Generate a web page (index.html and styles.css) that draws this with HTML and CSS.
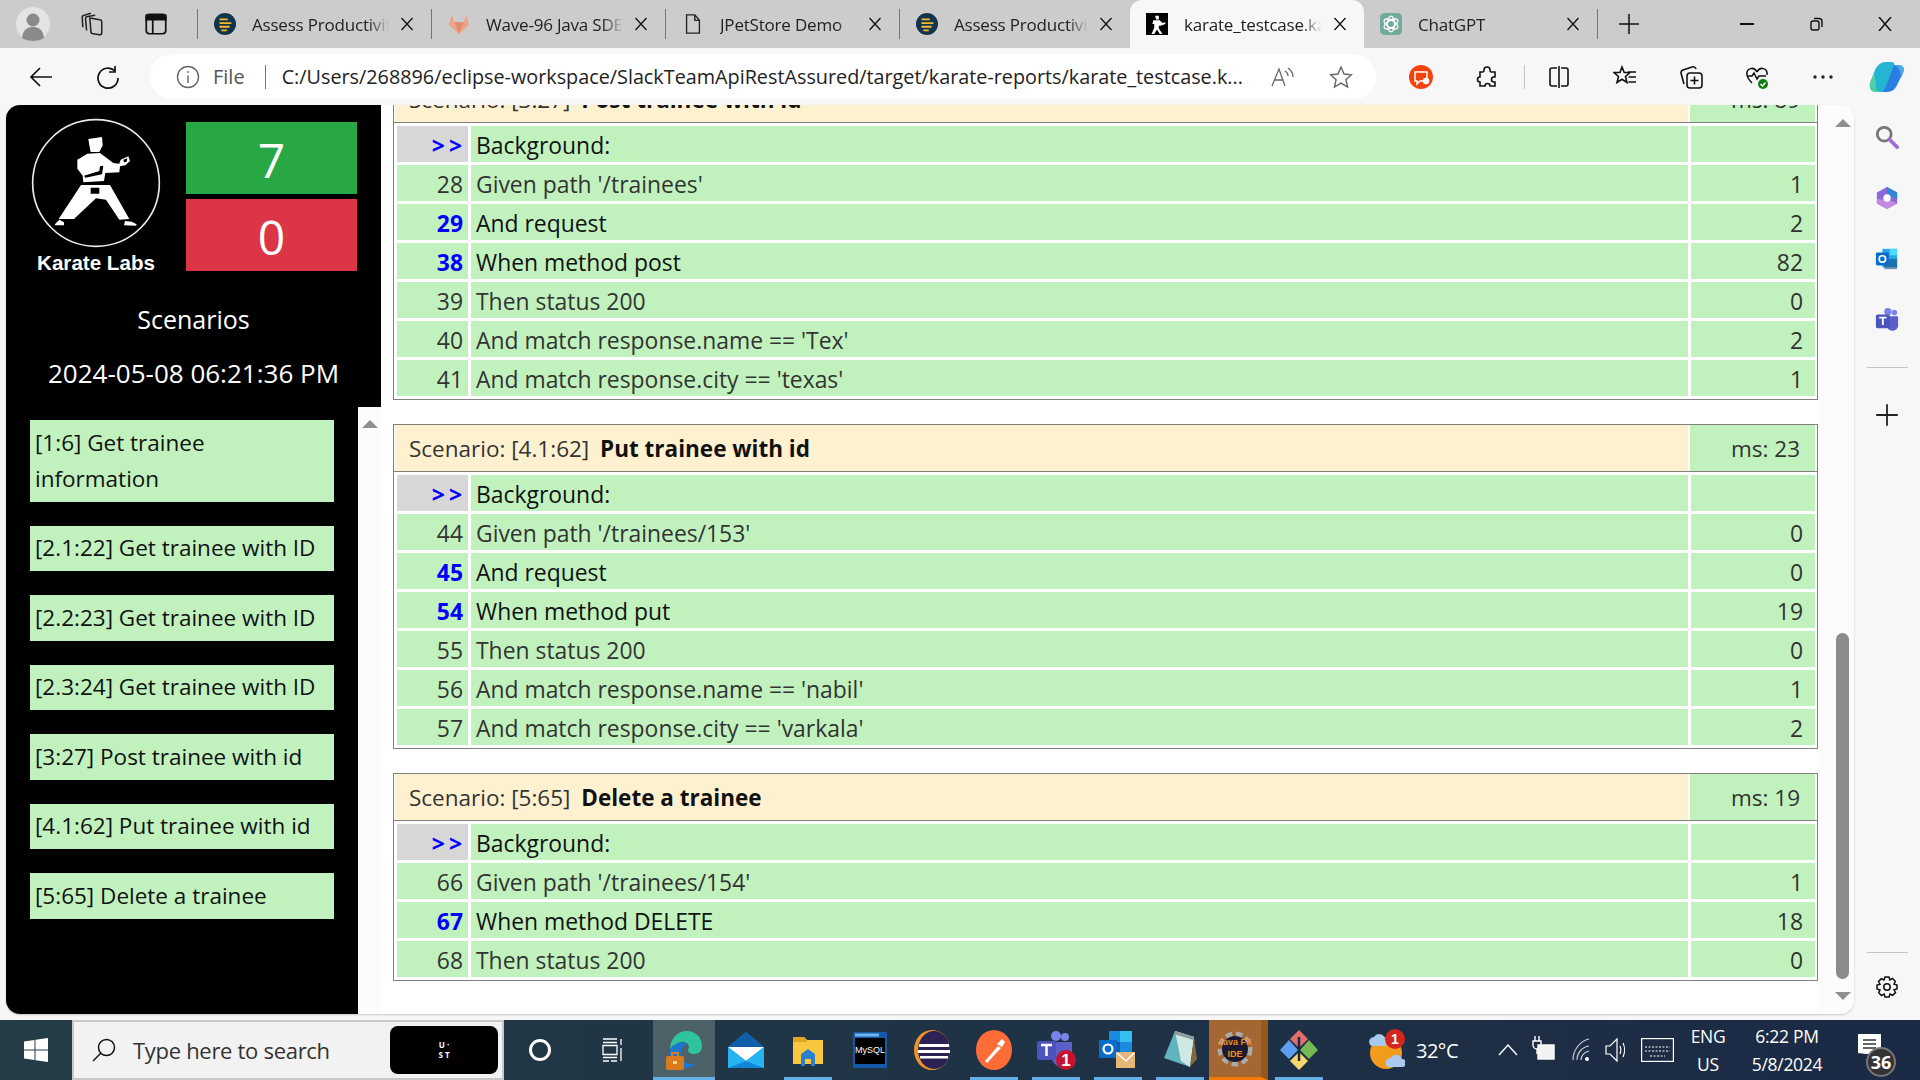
FILE: index.html
```html
<!DOCTYPE html>
<html lang="en">

<head>
    <meta charset="UTF-8">
    <title>karate_testcase.karate</title>
    <link rel="stylesheet" href="styles.css">
</head>

<body>
    <!-- shared icons -->
    <svg class="defs" width="0" height="0">
        <symbol id="i-close" viewBox="0 0 14 14"><path d="M1.5 1 12.5 13M12.5 1 1.5 13" fill="none" stroke="#111" stroke-width="1.3"/></symbol>
        <symbol id="i-assess" viewBox="0 0 24 24"><circle cx="12" cy="12" r="12" fill="#12344d"/><path d="M6 6h9v2H6zM6 10h13v2H6zM6 14h11v2H6zM8 18h6v2H8z" fill="#f5b82e"/></symbol>
    </svg>

    <div class="tabstrip">
        <div class="strip-left">
            <svg class="avatar" viewBox="0 0 34 34"><circle cx="17" cy="17" r="17" fill="#e4e4e4"/><circle cx="17" cy="13" r="6.5" fill="#8a8a8a"/><path d="M6 31c1-9 6-11 11-11s10 2 11 11c-6 4-16 4-22 0z" fill="#8a8a8a"/></svg>
            <svg class="strip-icon" viewBox="0 0 24 24" fill="none" stroke="#222" stroke-width="1.4"><path d="M10 6.500 19 8a2 2 0 0 1 2 2v10a2 2 0 0 1-2 2l-6-1a2 2 0 0 1-2-2z"/><path d="M7 18 6 7a2 2 0 0 1 2-2l7-1M3.500 15 3 6a2 2 0 0 1 2-2l6-2"/></svg>
            <svg class="strip-icon" viewBox="0 0 24 24" fill="none" stroke="#111" stroke-width="1.6"><rect x="3" y="3" width="18" height="18" rx="3"/><path d="M3 4h18v4H3z" fill="#111"/><path d="M9 8v13"/></svg>
        </div>
        <div class="tab-sep"></div>
        <div class="tab">
            <svg class="favicon"><use href="#i-assess"/></svg>
            <span class="tab-title">Assess Productivity Tools</span>
            <svg class="tab-close"><use href="#i-close"/></svg>
        </div>
        <div class="tab-sep"></div>
        <div class="tab">
            <svg class="favicon" viewBox="0 0 24 24"><path d="M12 23 1 13l3-11 3 8h10l3-8 3 11z" fill="#eba58a"/><path d="M12 23 7 10h10z" fill="#e58a6a"/></svg>
            <span class="tab-title">Wave-96 Java SDET Batch</span>
            <svg class="tab-close"><use href="#i-close"/></svg>
        </div>
        <div class="tab-sep"></div>
        <div class="tab">
            <svg class="favicon" viewBox="0 0 24 24" fill="none" stroke="#222" stroke-width="1.5"><path d="M5 2h9l5 6v14H5zM14 2v6h5"/></svg>
            <span class="tab-title">JPetStore Demo</span>
            <svg class="tab-close"><use href="#i-close"/></svg>
        </div>
        <div class="tab-sep"></div>
        <div class="tab tab-short">
            <svg class="favicon"><use href="#i-assess"/></svg>
            <span class="tab-title">Assess Productivity Tools</span>
            <svg class="tab-close"><use href="#i-close"/></svg>
        </div>
        <div class="tab tab-active">
            <svg class="favicon" viewBox="0 0 24 24"><rect width="24" height="24" fill="#000"/><path d="M10 3h4v4h-3zM8 8h7l3 3 3-1v2l-5 2h-2v3l4 6h-3l-3-5-3 5H6l3-7V12H7z" fill="#fff"/></svg>
            <span class="tab-title">karate_testcase.karate</span>
            <svg class="tab-close"><use href="#i-close"/></svg>
        </div>
        <div class="tab">
            <svg class="favicon" viewBox="0 0 24 24"><rect width="24" height="24" rx="5" fill="#74aa9c"/><g fill="none" stroke="#fff" stroke-width="1.4"><ellipse cx="12" cy="12" rx="4" ry="8.5"/><ellipse cx="12" cy="12" rx="4" ry="8.5" transform="rotate(60 12 12)"/><ellipse cx="12" cy="12" rx="4" ry="8.5" transform="rotate(120 12 12)"/></g></svg>
            <span class="tab-title">ChatGPT</span>
            <svg class="tab-close"><use href="#i-close"/></svg>
        </div>
        <div class="tab-sep"></div>
        <svg class="new-tab" viewBox="0 0 22 22"><path d="M11 1v20M1 11h20" stroke="#111" stroke-width="1.5"/></svg>
        <div class="win-controls">
            <svg class="win-btn" viewBox="0 0 14 14"><path d="M0 7h14" stroke="#111" stroke-width="2"/></svg>
            <svg class="win-btn" viewBox="0 0 14 14" fill="none" stroke="#111" stroke-width="1.4"><rect x="2" y="4" width="8" height="9" rx="2"/><path d="M5 1.5h5a3 3 0 0 1 3 3V10"/></svg>
            <svg class="win-btn" viewBox="0 0 14 14"><path d="M1 0 13 14M13 0 1 14" fill="none" stroke="#111" stroke-width="1.5"/></svg>
        </div>
    </div>

    <div class="toolbar">
        <svg class="nav-back" viewBox="0 0 24 24" fill="none" stroke="#111" stroke-width="1.7"><path d="M23 12H2M11 3l-9 9 9 9"/></svg>
        <svg class="nav-reload" viewBox="0 0 24 24" fill="none" stroke="#111" stroke-width="1.7"><path d="M19 6a10 10 0 1 0 3 7"/><path d="M19 1v6h-6"/></svg>
        <div class="addressbar">
            <svg class="info-icon" viewBox="0 0 24 24" fill="none" stroke="#666" stroke-width="1.4"><circle cx="12" cy="12" r="10.5"/><path d="M12 10.5V18M12 6v2"/></svg>
            <span class="addr-file">File</span>
            <span class="addr-sep"></span>
            <span class="addr-url">C:/Users/268896/eclipse-workspace/SlackTeamApiRestAssured/target/karate-reports/karate_testcase.k...</span>
            <svg class="addr-read" viewBox="0 0 26 24" fill="none" stroke="#666" stroke-width="1.3"><path d="M2 21 9 4l6 17M4.500 15h9"/><path d="M15 6c2 1 3 3 3 5M18 3c3 2 5 5 5 9"/></svg>
            <svg class="addr-star" viewBox="0 0 24 24" fill="none" stroke="#666" stroke-width="1.4"><path d="m12 2 3 7 7.500.7-5.600 5 1.700 7.300-6.600-3.900L5.400 22l1.700-7.300-5.600-5L9 9z"/></svg>
        </div>
        <div class="tools">
            <svg class="tool tool-red" viewBox="0 0 24 24"><circle cx="12" cy="12" r="12" fill="#f4440e"/><path d="M6 7h12v9h-7l-3 3v-3H6z" fill="none" stroke="#fff" stroke-width="1.5"/><circle cx="17" cy="16" r="3.200" fill="#fff"/></svg>
            <svg class="tool" viewBox="0 0 24 24" fill="none" stroke="#111" stroke-width="1.6"><path d="M9 5a3 3 0 0 1 6 0c0 1 0 2 1 2h4v5h-1a2.500 2.500 0 0 0 0 5h1v4h-5a2.500 2.500 0 0 0-5 0H5v-4a2.500 2.500 0 0 1 0-5V7h3c1 0 1-1 1-2z"/></svg>
            <span class="tool-sep"></span>
            <svg class="tool" viewBox="0 0 24 24" fill="none" stroke="#111" stroke-width="1.6"><path d="M10 3H5a2 2 0 0 0-2 2v14a2 2 0 0 0 2 2h5M14 3h5a2 2 0 0 1 2 2v14a2 2 0 0 1-2 2h-5M12 1v22"/></svg>
            <svg class="tool" viewBox="0 0 24 24" fill="none" stroke="#111" stroke-width="1.6"><path d="m9 2 2.200 5.500H17l-4.500 4 1.500 6-5-3.200L4 17.500l1.500-6L1 7.500h6zM15 7h8M15.500 12H23M15.500 17H23"/></svg>
            <svg class="tool" viewBox="0 0 24 24" fill="none" stroke="#111" stroke-width="1.6"><rect x="8" y="8" width="15" height="15" rx="3"/><path d="M15.500 11.500v8M11.500 15.500h8M5 19 2 8a3 3 0 0 1 2-3l9-3a3 3 0 0 1 4 2"/></svg>
            <svg class="tool" viewBox="0 0 24 24" fill="none" stroke="#111" stroke-width="1.5"><path d="M12 7C9 1 1 3 2 10c.5 3 3 6 5 8M12 7c3-6 11-4 10 3"/><path d="M2 11h5l2-3 3 6 2-3h7"/><circle cx="18" cy="19" r="5" fill="#107c10" stroke="none"/><path d="m15.500 19 2 2 3-3.500" stroke="#fff"/></svg>
            <svg class="tool" viewBox="0 0 24 24" fill="#222"><circle cx="4" cy="12" r="1.700"/><circle cx="12" cy="12" r="1.700"/><circle cx="20" cy="12" r="1.700"/></svg>
            <svg class="tool tool-copilot" viewBox="0 0 36 32"><path d="M17 1h5c3 0 4 2 3 5l-7 21c-1 3-3 4-6 4H7c-5 0-7-4-6-9l4-10C7 5 11 1 17 1z" fill="#23b5d3"/><path d="M12 31h6c6 0 9-4 11-9l5-10c2-5 0-8-5-8h-4l-8 21c-1 3-3 6-5 6z" fill="#2a7de1"/><path d="M5 12 1 22c-1 5 1 9 6 9h5c-5-1-6-4-5-9z" fill="#4fd1a5"/><path d="M25 4h4c5 0 7 3 5 8l-2 5c0-6-2-11-7-13z" fill="#4ea8f0"/></svg>
        </div>
    </div>

    <div class="window">
        <div class="content">
            <aside class="sidebar">
                <div class="brand">
                    <div class="logo">
                        <svg class="logo-mark" viewBox="96 56 384 384">
                            <circle cx="288" cy="248" r="190" fill="none" stroke="#e8e8e8" stroke-width="5"/>
                            <g fill="#fff">
                                <path d="M265 116 306 110 308 135 298 155 272 155 268 135z"/>
                                <path d="M232 178 262 160 300 158 340 188 358 190 362 178 385 168 390 182 376 195 360 198 358 216 316 218 312 242 250 246 248 226 232 205z"/>
                                <path d="M243 254 330 254 388 356 358 358 318 298 288 294 222 356 176 356z"/>
                                <path d="M165 372 178 358 192 366 192 375 165 375zM372 375 375 362 395 364 410 372 408 376z"/>
                            </g>
                            <path d="M370 178 382 174 380 184 372 186zM272 262h26v18h-26zM252 226 298 212 300 198 310 196 306 222 256 232z" fill="#000"/>
                        </svg>
                        <div class="logo-name">Karate Labs</div>
                    </div>
                    <div class="counts">
                        <div class="count count-pass">7</div>
                        <div class="count count-fail">0</div>
                    </div>
                </div>
                <div class="side-title">Scenarios</div>
                <div class="side-date">2024-05-08 06:21:36 PM</div>
                <div class="side-body">
                    <nav class="scenario-nav">
                        <a class="nav-item">[1:6] Get trainee information</a>
                        <a class="nav-item">[2.1:22] Get trainee with ID</a>
                        <a class="nav-item">[2.2:23] Get trainee with ID</a>
                        <a class="nav-item">[2.3:24] Get trainee with ID</a>
                        <a class="nav-item">[3:27] Post trainee with id</a>
                        <a class="nav-item">[4.1:62] Put trainee with id</a>
                        <a class="nav-item">[5:65] Delete a trainee</a>
                    </nav>
                    <div class="nav-scroll"><span class="arrow-up"></span></div>
                </div>
            </aside>

            <main class="report">
                <section class="scenario">
                    <div class="scenario-head">
                        <div class="head-title">Scenario: [3:27] <b>Post trainee with id</b></div>
                        <div class="head-ms">ms: 89</div>
                    </div>
                    <div class="steps">
                        <div class="ln ln-bg">&gt;&gt;</div><div class="txt txt-dark">Background:</div><div class="ms"></div>
                        <div class="ln">28</div><div class="txt">Given path '/trainees'</div><div class="ms">1</div>
                        <div class="ln ln-hit">29</div><div class="txt txt-dark">And request</div><div class="ms">2</div>
                        <div class="ln ln-hit">38</div><div class="txt txt-dark">When method post</div><div class="ms">82</div>
                        <div class="ln">39</div><div class="txt">Then status 200</div><div class="ms">0</div>
                        <div class="ln">40</div><div class="txt">And match response.name == 'Tex'</div><div class="ms">2</div>
                        <div class="ln">41</div><div class="txt">And match response.city == 'texas'</div><div class="ms">1</div>
                    </div>
                </section>

                <section class="scenario">
                    <div class="scenario-head">
                        <div class="head-title">Scenario: [4.1:62] <b>Put trainee with id</b></div>
                        <div class="head-ms">ms: 23</div>
                    </div>
                    <div class="steps">
                        <div class="ln ln-bg">&gt;&gt;</div><div class="txt txt-dark">Background:</div><div class="ms"></div>
                        <div class="ln">44</div><div class="txt">Given path '/trainees/153'</div><div class="ms">0</div>
                        <div class="ln ln-hit">45</div><div class="txt txt-dark">And request</div><div class="ms">0</div>
                        <div class="ln ln-hit">54</div><div class="txt txt-dark">When method put</div><div class="ms">19</div>
                        <div class="ln">55</div><div class="txt">Then status 200</div><div class="ms">0</div>
                        <div class="ln">56</div><div class="txt">And match response.name == 'nabil'</div><div class="ms">1</div>
                        <div class="ln">57</div><div class="txt">And match response.city == 'varkala'</div><div class="ms">2</div>
                    </div>
                </section>

                <section class="scenario">
                    <div class="scenario-head">
                        <div class="head-title">Scenario: [5:65] <b>Delete a trainee</b></div>
                        <div class="head-ms">ms: 19</div>
                    </div>
                    <div class="steps">
                        <div class="ln ln-bg">&gt;&gt;</div><div class="txt txt-dark">Background:</div><div class="ms"></div>
                        <div class="ln">66</div><div class="txt">Given path '/trainees/154'</div><div class="ms">1</div>
                        <div class="ln ln-hit">67</div><div class="txt txt-dark">When method DELETE</div><div class="ms">18</div>
                        <div class="ln">68</div><div class="txt">Then status 200</div><div class="ms">0</div>
                    </div>
                </section>
            </main>

            <div class="page-scroll">
                <span class="arrow-up"></span>
                <div class="page-track"><div class="page-thumb"></div></div>
                <span class="arrow-down"></span>
            </div>
        </div>

        <div class="rail">
            <svg class="rail-icon" viewBox="0 0 26 26"><circle cx="10" cy="10" r="7.500" fill="none" stroke="#777" stroke-width="3"/><path d="m16 16 8 8" stroke="#a06cd5" stroke-width="4" stroke-linecap="round"/></svg>
            <svg class="rail-icon" viewBox="0 0 26 26"><path d="M13 1 24 7v12l-11 6-11-6V7z" fill="#8a6ad8"/><path d="M13 1 24 7v7l-6-3-5-3z" fill="#2f86d6"/><path d="M2 14v5l11 6 11-6-6-3z" fill="#c58ae0"/><circle cx="13" cy="13" r="4" fill="#fff"/></svg>
            <svg class="rail-icon" viewBox="0 0 26 26"><path d="M8 2h16v20H8z" fill="#28a8ea"/><path d="M16 2h8v7h-8z" fill="#50d9ff"/><path d="M10 13h14v11H10z" fill="#14447d" opacity=".55"/><rect x="1" y="6" width="14" height="14" rx="1.500" fill="#0a6cc9"/><circle cx="8" cy="13" r="3.500" fill="none" stroke="#fff" stroke-width="1.800"/></svg>
            <svg class="rail-icon" viewBox="0 0 26 26"><circle cx="21" cy="5" r="3" fill="#7b83eb"/><circle cx="14" cy="4" r="4" fill="#7b83eb"/><path d="M8 9h17v8a6 6 0 0 1-12 3H8z" fill="#5b5fc7"/><rect x="1" y="7" width="15" height="15" rx="2" fill="#4b53bc"/><path d="M4.500 10.500h8M8.500 10.500v8" stroke="#fff" stroke-width="2"/></svg>
            <span class="rail-line"></span>
            <svg class="rail-icon rail-plus" viewBox="0 0 20 20"><path d="M10 1v18M1 10h18" stroke="#222" stroke-width="1.500"/></svg>
            <span class="rail-line rail-line-bottom"></span>
            <svg class="rail-icon" viewBox="0 0 24 24" fill="none" stroke="#111" stroke-width="1.500"><circle cx="12" cy="12" r="3.200"/><path d="m10 2 4 0 .8 3 2.700-1.500 2.800 2.800L19 9l3 1v4l-3 .8 1.500 2.700-2.800 2.800L15 19l-1 3h-4l-.8-3-2.700 1.500-2.800-2.800L5 15l-3-1v-4l3-.8-1.500-2.700 2.800-2.800L9 5z"/></svg>
        </div>
    </div>

    <footer class="taskbar">
        <div class="start">
            <svg viewBox="0 0 24 24" width="24" height="24" fill="#fff"><path d="M0 3.500 10.500 2v9.500H0zM11.500 1.800 24 0v11.500H11.500zM0 12.500h10.500V22L0 20.500zM11.500 12.500H24V24l-12.500-1.800z"/></svg>
        </div>
        <div class="search">
            <svg class="search-glass" viewBox="0 0 24 24" fill="none" stroke="#111" stroke-width="1.500"><circle cx="14.500" cy="9.500" r="8"/><path d="M9 15 1 23"/></svg>
            <span class="search-text">Type here to search</span>
            <div class="search-promo"><span>U ·<br>S T</span></div>
        </div>
        <div class="task-tool">
            <svg viewBox="0 0 24 24" width="24" height="24" fill="none" stroke="#fff" stroke-width="3"><circle cx="12" cy="12" r="9.500"/></svg>
        </div>
        <div class="task-tool">
            <svg viewBox="0 0 24 24" width="24" height="24" fill="none" stroke="#fff" stroke-width="1.300"><path d="M3 1h14M3 4.500h14M3 7.500h14v9H3zM3 19.500h14M3 23h6M11 23h6M21 1v6M21 10v13"/></svg>
        </div>
        <div class="apps">
            <div class="app app-open app-focus">
                <svg viewBox="0 0 36 40" width="36" height="40"><path d="M4 20C4 8 12 1 21 1c9 0 15 7 15 15 0 5-3 8-8 8-4 0-6-2-6-4 3-5-2-9-7-8-6 1-10 6-11 8z" fill="#2fc3a0"/><path d="M4 20c-1 10 6 18 15 18 5 0 9-2 12-5-7 3-15 0-16-7-1-6 2-11 7-13-8-2-17 2-18 7z" fill="#1a78d0"/><rect x="0" y="26" width="18" height="14" rx="2" fill="#d97a1d"/><path d="M6 26v-3h6v3" fill="none" stroke="#d97a1d" stroke-width="2"/><rect x="7" y="31" width="4" height="3" fill="#ffd58a"/></svg>
            </div>
            <div class="app">
                <svg viewBox="0 0 36 36" width="36" height="36"><path d="M18 0 36 15v21H0V15z" fill="#1285d8"/><path d="M0 15h36L18 29z" fill="#fff"/><path d="M18 0 36 15H0z" fill="#0f5fa8"/><path d="M0 15 18 29 0 36zM36 15 18 29l18 7z" fill="#25b4ef"/></svg>
            </div>
            <div class="app app-open">
                <svg viewBox="0 0 32 32" width="32" height="32"><path d="M1 3h11l3 3h16v24H1z" fill="#f8c73e"/><path d="M1 3h11l3 3v2H1z" fill="#e0a526"/><path d="M9 32V20l7-5 7 5v12h-4v-7h-6v7z" fill="#2a80cf"/></svg>
            </div>
            <div class="app">
                <svg viewBox="0 0 34 36" width="34" height="36"><rect width="34" height="36" rx="1" fill="#1559a8"/><rect x="2" y="6" width="30" height="26" fill="#000"/><rect x="2" y="1.500" width="24" height="3" fill="#6fb6f0"/><text x="17" y="21" class="mysql-label">MySQL</text></svg>
            </div>
            <div class="app">
                <svg viewBox="0 0 36 40" width="36" height="40"><ellipse cx="18" cy="20" rx="18" ry="20" fill="#f0932b"/><ellipse cx="20" cy="20" rx="16" ry="19" fill="#2c2255"/><path d="M5 14h30v3H5zM4 20h32v3H4zM6 26h28v2.500H6z" fill="#fff"/></svg>
            </div>
            <div class="app app-open">
                <svg viewBox="0 0 36 40" width="36" height="40"><ellipse cx="18" cy="20" rx="18" ry="20" fill="#ff6c37"/><path d="M9 31 22 16l3 2-14 15z" fill="#fff"/><path d="M21 14l5-5 3 3-3 5z" fill="#fff"/></svg>
            </div>
            <div class="app app-open">
                <svg viewBox="0 0 40 40" width="40" height="40"><circle cx="29" cy="7" r="4" fill="#7b83eb"/><circle cx="20" cy="6" r="5" fill="#7b83eb"/><path d="M12 12h24v14a10 10 0 0 1-20 2h-4z" fill="#5b5fc7"/><rect x="1" y="11" width="19" height="19" rx="2" fill="#4b53bc"/><path d="M5 15h11M10.500 15v11" stroke="#fff" stroke-width="2.500"/><circle cx="30" cy="30" r="10" fill="#c4122f"/><text x="30" y="36" class="badge-num">1</text></svg>
            </div>
            <div class="app app-open">
                <svg viewBox="0 0 40 40" width="40" height="40"><path d="M11 1h23v24H11z" fill="#1b8be0"/><path d="M22 1h12v11H22z" fill="#33bff0"/><path d="M11 12h11v11H11z" fill="#0f5fa8"/><rect x="1" y="10" width="18" height="18" rx="1" fill="#0a6cc9"/><circle cx="10" cy="19" r="4.500" fill="none" stroke="#fff" stroke-width="2.200"/><rect x="18" y="22" width="19" height="16" fill="#e8b676"/><path d="m19 23 9 8 8-8" fill="none" stroke="#fff" stroke-width="1.500"/></svg>
            </div>
            <div class="app app-open">
                <svg viewBox="0 0 36 40" width="36" height="40"><path d="M13 1 32 7l-4 30L2 28z" fill="#5fb4bd"/><path d="M13 1 32 7l-4 30-9-6z" fill="#cfe8e4"/><path d="M13 1 32 7l-.8 3L12 4z" fill="#8f9aa0"/><path d="M32 7l3 22-7 8z" fill="#7e6a3d"/></svg>
            </div>
            <div class="app app-javafx">
                <svg viewBox="0 0 40 40" width="40" height="40"><circle cx="20" cy="20" r="14" fill="none" stroke="#aaa" stroke-width="7" stroke-dasharray="6 3.500"/><circle cx="20" cy="20" r="13" fill="#1c1a2e"/><text x="20" y="16" class="fx-label">Java FX</text><text x="20" y="28" class="fx-label">IDE</text></svg>
            </div>
            <div class="app app-open">
                <svg viewBox="0 0 38 42" width="38" height="42"><path d="M19 1 28 10 19 19 10 10z" fill="#e26d6d"/><path d="M9 11 18 21 9 30 0 21z" fill="#5e9ef0"/><path d="M29 11 38 21 29 30 20 21z" fill="#76b852"/><path d="M19 23 28 32 19 41 10 32z" fill="#f5d76e"/><path d="M19 8v24" stroke="#1b2a44" stroke-width="2.500"/></svg>
            </div>
        </div>
        <div class="tray">
            <svg class="tray-weather" viewBox="0 0 37 42"><circle cx="18" cy="24" r="16" fill="#f29b1d"/><path d="M2 16a5 5 0 0 1 4-8 6 6 0 0 1 11 2 4 4 0 0 1 0 7H4z" fill="#a9c9ee"/><path d="M18 36a5 5 0 0 1 5-7 6 6 0 0 1 11 1 4 4 0 0 1 0 8H20z" fill="#a9c9ee"/><circle cx="27" cy="10" r="10" fill="#d3261e"/><text x="27" y="15" class="weather-num">1</text></svg>
            <span class="tray-temp">32°C</span>
            <svg class="tray-caret" viewBox="0 0 20 12"><path d="M1 11 10 1l9 10" fill="none" stroke="#fff" stroke-width="1.400"/></svg>
            <svg class="tray-power" viewBox="0 0 24 28" fill="none" stroke="#fff" stroke-width="1.400"><path d="M4 0v5M8 0v5M2 5h8v4a4 4 0 0 1-8 0zM6 13v5"/><rect x="7" y="9" width="16" height="14" fill="#f2f2f2"/></svg>
            <svg class="tray-wifi" viewBox="0 0 18 24" fill="none" stroke="#c8d0d8" stroke-width="1.200"><path d="M1 22C1 12 8 3 17 1M5 22c0-7 5-13 12-14M9 22c0-4 3-8 8-9"/><circle cx="15" cy="21" r="2" fill="#fff" stroke="none"/></svg>
            <svg class="tray-volume" viewBox="0 0 22 26" fill="none" stroke="#fff" stroke-width="1.200"><path d="M1 9h4l7-7v22l-7-7H1z"/><path d="M15 9c1 2 1 6 0 8M18 6c2 4 2 10 0 14"/></svg>
            <svg class="tray-keys" viewBox="0 0 33 24" fill="none" stroke="#fff" stroke-width="1.200"><rect x=".6" y=".6" width="31.800" height="22.800"/><path d="M4 9h25M4 13h25M9 18h15" stroke-dasharray="2 1.500"/></svg>
            <div class="tray-lang">ENG<br>US</div>
            <div class="tray-clock">6:22 PM<br>5/8/2024</div>
            <div class="tray-notify">
                <svg viewBox="0 0 23 20" width="23" height="20"><path d="M0 0h23v20H8l-8-1z" fill="#fff"/><path d="M5 6h13M5 10h13M5 14h13" stroke="#333" stroke-width="1.300"/></svg>
                <span class="notify-count">36</span>
            </div>
        </div>
    </footer>
</body>

</html>
```

FILE: styles.css
```css
* {
    box-sizing: border-box;
}

body {
    margin: 0;
    width: 1920px;
    height: 1080px;
    display: flex;
    flex-direction: column;
    overflow: hidden;
    font-family: "Open Sans", "Noto Sans", sans-serif;
    color: #222;
    background-color: #f7f7f7;
}

.defs {
    position: absolute;
}

/* Tab strip */
.tabstrip {
    height: 48px;
    flex: none;
    display: flex;
    align-items: center;
    background-color: #cccccc;
}

.strip-left {
    width: 197px;
    flex: none;
    display: flex;
    align-items: center;
}

.avatar {
    width: 34px;
    height: 36px;
    margin-left: 16px;
}

.strip-icon {
    width: 26px;
    height: 26px;
    margin-left: 29px;
}

.strip-icon + .strip-icon {
    margin-left: 38px;
}

.tab-sep {
    width: 1px;
    height: 30px;
    flex: none;
    background-color: #777;
}

.tab {
    width: 233px;
    height: 48px;
    flex: none;
    display: flex;
    align-items: center;
    padding: 0 17px 0 16px;
    font-size: 17px;
    letter-spacing: -0.2px;
}

.tab-short {
    width: 230px;
}

.tab-active {
    width: 234px;
    background-color: #f7f7f7;
    border-radius: 12px 12px 0 0;
}

.favicon {
    width: 22px;
    height: 22px;
    flex: none;
    margin-right: 16px;
}

.tab-title {
    flex: 1;
    min-width: 0;
    overflow: hidden;
    white-space: nowrap;
    -webkit-mask-image: linear-gradient(to right, #000 85%, transparent 100%);
    mask-image: linear-gradient(to right, #000 85%, transparent 100%);
}

.tab-close {
    width: 14px;
    height: 14px;
    flex: none;
    margin-left: 11px;
}

.new-tab {
    width: 22px;
    height: 22px;
    flex: none;
    margin-left: 20px;
}

.win-controls {
    margin-left: auto;
    display: flex;
    align-items: center;
    gap: 55px;
    padding-right: 28px;
}

.win-btn {
    width: 14px;
    height: 14px;
}

/* Address bar row */
.toolbar {
    height: 57px;
    flex: none;
    display: flex;
    align-items: center;
    background-color: #f7f7f7;
}

.nav-back {
    width: 24px;
    height: 24px;
    flex: none;
    margin-left: 29px;
}

.nav-reload {
    width: 24px;
    height: 24px;
    flex: none;
    margin-left: 43px;
}

.addressbar {
    width: 1226px;
    height: 45px;
    flex: none;
    margin-left: 30px;
    display: flex;
    align-items: center;
    padding: 0 23px 0 26px;
    background-color: #fff;
    border-radius: 22px;
}

.info-icon {
    width: 24px;
    height: 24px;
    flex: none;
}

.addr-file {
    margin-left: 13px;
    font-size: 20px;
    color: #555;
}

.addr-sep {
    width: 1px;
    height: 24px;
    flex: none;
    margin: 0 16px 0 20px;
    background-color: #777;
}

.addr-url {
    font-size: 19.8px;
    white-space: nowrap;
    color: #222;
}

.addr-read {
    width: 26px;
    height: 24px;
    flex: none;
    margin-left: auto;
}

.addr-star {
    width: 24px;
    height: 24px;
    flex: none;
    margin-left: 33px;
}

.tools {
    flex: 1;
    display: flex;
    align-items: center;
    padding-left: 33px;
    gap: 42px;
}

.tool {
    width: 24px;
    height: 24px;
    flex: none;
}

.tool-sep {
    width: 1px;
    height: 24px;
    flex: none;
    margin: 0 -20px 0 -17px;
    background-color: #c4c4c4;
}

.tool-copilot {
    width: 36px;
    height: 32px;
    margin-left: -8px;
}

/* Page area */
.window {
    flex: 1;
    min-height: 0;
    display: flex;
}

.content {
    flex: 1;
    min-width: 0;
    display: flex;
    margin: 0 0 6px 6px;
    background-color: #fff;
    border-radius: 14px;
    box-shadow: 0 1px 2px rgba(0, 0, 0, 0.2);
    overflow: hidden;
}

.sidebar {
    width: 375px;
    flex: none;
    display: flex;
    flex-direction: column;
    background-color: #000;
    color: #fff;
}

.brand {
    display: flex;
    padding: 14px 0 0 26px;
}

.logo {
    width: 128px;
    text-align: center;
}

.logo-mark {
    display: block;
    width: 128px;
    height: 128px;
    overflow: visible;
}

.logo-name {
    margin-top: 4px;
    font-family: "Liberation Sans", Arial, sans-serif;
    font-weight: bold;
    font-size: 20.6px;
    white-space: nowrap;
}

.counts {
    width: 171px;
    margin: 3px 0 0 26px;
    display: flex;
    flex-direction: column;
    gap: 5px;
}

.count {
    height: 72px;
    padding-top: 2px;
    display: flex;
    align-items: center;
    justify-content: center;
    font-size: 48px;
    color: #fff;
}

.count-pass {
    background-color: #28a745;
}

.count-fail {
    background-color: #dc3545;
}

.side-title,
.side-date {
    height: 40px;
    line-height: 40px;
    text-align: center;
    white-space: nowrap;
}

.side-title {
    margin-top: 24px;
    font-size: 25px;
}

.side-date {
    margin-top: 14px;
    font-size: 26px;
}

.side-body {
    flex: 1;
    min-height: 0;
    margin-top: 14px;
    display: flex;
}

.scenario-nav {
    flex: 1;
    display: flex;
    flex-direction: column;
    gap: 24px;
    padding: 13px 24px 12px;
}

.nav-item {
    padding: 4.75px 5px;
    font-size: 22.5px;
    line-height: 36px;
    color: #111;
    background-color: #c1f2be;
}

.nav-scroll {
    width: 23px;
    flex: none;
    display: flex;
    flex-direction: column;
    align-items: center;
    padding-top: 13px;
    background-color: #fcfcfc;
}

.arrow-up,
.arrow-down {
    width: 0;
    height: 0;
    flex: none;
    border-left: 8px solid transparent;
    border-right: 8px solid transparent;
}

.arrow-up {
    border-bottom: 8px solid #8f8f8f;
}

.arrow-down {
    border-top: 8px solid #8f8f8f;
}

/* Report tables */
.report {
    flex: 1;
    min-width: 0;
    display: flex;
    flex-direction: column;
    justify-content: flex-end;
    gap: 24px;
    padding: 0 0 33px 12px;
    overflow: hidden;
    font-size: 22.5px;
}

.scenario {
    flex: none;
    border: 1px solid #808080;
    background-color: #fff;
}

.scenario-head {
    height: 47px;
    display: grid;
    grid-template-columns: 1fr 125px;
    column-gap: 2px;
    padding: 0 2px 0 1px;
    border-bottom: 1px solid #808080;
}

.head-title {
    padding-left: 14px;
    line-height: 48px;
    color: #333;
    white-space: nowrap;
    overflow: hidden;
    background-color: #fef1d0;
}

.head-title b {
    margin-left: 5px;
    color: #111;
}

.head-ms {
    padding-right: 15px;
    line-height: 48px;
    text-align: right;
    color: #333;
    overflow: hidden;
    background-color: #c1f2be;
}

.steps {
    display: grid;
    grid-template-columns: 71px 1fr 124px;
    gap: 3px;
    padding: 3px 2px 3px 3px;
    font-size: 22.9px;
}

.ln,
.txt,
.ms {
    height: 36px;
    line-height: 39px;
    background-color: #c1f2be;
    color: #333;
}

.ln {
    padding-right: 5px;
    text-align: right;
}

.ln-bg {
    padding-right: 2px;
    font-weight: bold;
    letter-spacing: 4px;
    color: #0000ff;
    background-color: #d7d7d7;
}

.ln-hit {
    font-weight: bold;
    color: #0000ff;
}

.txt {
    padding-left: 5px;
}

.txt-dark {
    color: #111;
}

.ms {
    padding-right: 12px;
    text-align: right;
}

.page-scroll {
    width: 36px;
    flex: none;
    display: flex;
    flex-direction: column;
    align-items: center;
    padding: 14px 0 14px 13px;
    background-color: #fcfcfc;
}

.page-track {
    flex: 1;
    display: flex;
    flex-direction: column;
    justify-content: flex-end;
    padding-bottom: 13px;
}

.page-thumb {
    width: 13px;
    height: 346px;
    background-color: #8b8b8b;
    border-radius: 7px;
}

/* Right rail */
.rail {
    width: 66px;
    flex: none;
    display: flex;
    flex-direction: column;
    align-items: center;
    gap: 37px;
    padding: 20px 0 21px;
}

.rail-icon {
    width: 24px;
    height: 24px;
    flex: none;
}

.rail-line {
    width: 41px;
    height: 1px;
    flex: none;
    margin: -2px 0 0;
    background-color: #c4c4c4;
}

.rail-plus {
    margin-top: -2px;
}

.rail-line-bottom {
    margin: auto 0 -15px;
}

/* Taskbar */
.taskbar {
    height: 60px;
    flex: none;
    display: flex;
    align-items: center;
    color: #fff;
    background: linear-gradient(to right, #233c46, #1b2a45);
}

.start {
    width: 72px;
    height: 60px;
    flex: none;
    display: flex;
    align-items: center;
    justify-content: center;
}

.search {
    width: 432px;
    height: 60px;
    flex: none;
    display: flex;
    align-items: center;
    padding: 0 4px 0 18px;
    background-color: #f2f2f2;
    border: 2px solid #c8c8c8;
    color: #333;
}

.search-glass {
    width: 24px;
    height: 24px;
    flex: none;
}

.search-text {
    margin-left: 17px;
    font-size: 22px;
    letter-spacing: -0.3px;
}

.search-promo {
    width: 108px;
    height: 48px;
    margin-left: auto;
    display: flex;
    align-items: center;
    justify-content: center;
    text-align: center;
    font-size: 8px;
    line-height: 10px;
    font-weight: bold;
    color: #fff;
    background-color: #000;
    border-radius: 8px;
}

.task-tool {
    width: 72px;
    flex: none;
    display: flex;
    justify-content: center;
}

.apps {
    margin-left: 5px;
    display: flex;
    flex: none;
}

.app {
    width: 62px;
    height: 60px;
    flex: none;
    position: relative;
    display: flex;
    align-items: center;
    justify-content: center;
}

/* running app marker along the bottom edge */
.app-open::after {
    content: "";
    position: absolute;
    left: 7px;
    right: 7px;
    bottom: 0;
    height: 3px;
    background-color: #63afe6;
}

.app-focus {
    background-color: #4d6168;
}

.app-focus::after {
    left: 0;
    right: 0;
}

.app-javafx {
    width: 59px;
    margin-left: -2px;
    background-color: #a56731;
    border-right: 7px solid #95591f;
    border-bottom: 3px solid #f57a00;
}

.mysql-label {
    font-family: "Liberation Sans", Arial, sans-serif;
    font-size: 9px;
    fill: #fff;
    text-anchor: middle;
}

.badge-num {
    font-family: "Liberation Sans", Arial, sans-serif;
    font-weight: bold;
    font-size: 17px;
    fill: #fff;
    text-anchor: middle;
}

.fx-label {
    font-family: "Liberation Sans", Arial, sans-serif;
    font-weight: bold;
    font-size: 9px;
    fill: #f08a1a;
    text-anchor: middle;
}

.weather-num {
    font-family: "Liberation Sans", Arial, sans-serif;
    font-weight: bold;
    font-size: 14px;
    fill: #fff;
    text-anchor: middle;
}

.tray {
    margin-left: 38px;
    display: flex;
    align-items: center;
    flex: none;
}

.tray-weather {
    width: 37px;
    height: 42px;
    flex: none;
}

.tray-temp {
    width: 46px;
    margin-left: 11px;
    font-size: 20px;
    letter-spacing: -0.5px;
    white-space: nowrap;
}

.tray-caret {
    width: 20px;
    height: 12px;
    flex: none;
    margin-left: 36px;
}

.tray-power {
    width: 24px;
    height: 28px;
    flex: none;
    margin-left: 13px;
}

.tray-wifi {
    width: 18px;
    height: 24px;
    flex: none;
    margin-left: 17px;
}

.tray-volume {
    width: 22px;
    height: 26px;
    flex: none;
    margin-left: 15px;
}

.tray-keys {
    width: 33px;
    height: 24px;
    flex: none;
    margin-left: 14px;
}

.tray-lang,
.tray-clock {
    text-align: center;
    font-size: 17.5px;
    line-height: 28px;
    letter-spacing: -0.3px;
    white-space: nowrap;
}

.tray-lang {
    width: 36px;
    margin-left: 16px;
}

.tray-clock {
    width: 74px;
    margin-left: 24px;
}

.tray-notify {
    position: relative;
    margin: -12px 0 0 34px;
    line-height: 0;
}

.notify-count {
    position: absolute;
    left: 8px;
    top: 13px;
    width: 30px;
    height: 30px;
    line-height: 26px;
    text-align: center;
    font-size: 18px;
    font-weight: bold;
    color: #fff;
    background-color: #333;
    border: 2px solid #777;
    border-radius: 50%;
}
```
